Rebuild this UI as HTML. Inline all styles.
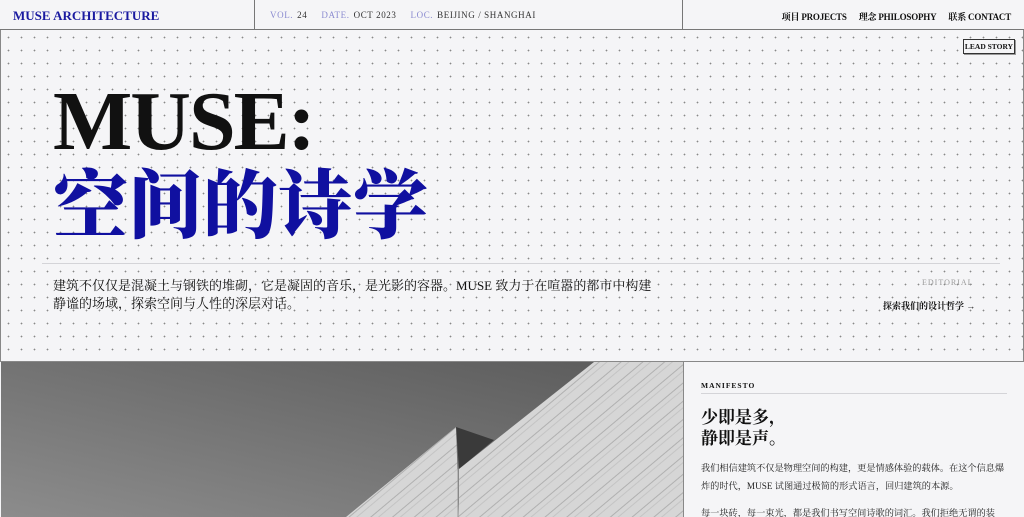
<!DOCTYPE html>
<html><head><meta charset="utf-8"><style>
*{margin:0;padding:0;box-sizing:border-box}
html,body{width:1024px;height:517px;overflow:hidden}
body{background:#f5f5f7;font-family:"Liberation Serif","Noto Serif CJK SC",serif;color:#111;position:relative}
.hdr{position:absolute;left:0;top:0;width:1024px;height:30px;border-bottom:1px solid #777}
.logo{position:absolute;left:13px;top:8px;font-size:13px;font-weight:bold;color:#1a1aa0;letter-spacing:0}
.v1{position:absolute;left:254px;top:0;width:1px;height:30px;background:#777}
.v2{position:absolute;left:682px;top:0;width:1px;height:30px;background:#777}
.meta{position:absolute;left:270px;top:10px;font-size:9px;letter-spacing:0.6px;color:#333}
.meta span{color:#8b8bd0;margin-right:4px}
.meta b{font-weight:normal;margin-right:14px}
.nav{position:absolute;right:13px;top:10px;font-size:9px;font-weight:bold;letter-spacing:-0.2px}
.nav i{font-style:normal;margin-left:12px}
.hero{position:absolute;left:0;top:30px;width:1024px;height:332px;border-left:1px solid #888;border-right:1px solid #888;border-bottom:1px solid #888;
background-image:radial-gradient(circle,#888 0.7px,transparent 1px);background-size:13px 13px;background-position:1px 1px}
.lead{position:absolute;left:963px;top:39px;width:52px;height:15px;border:1px solid #333;background:#f5f5f7;font-size:7.5px;font-weight:bold;text-align:center;line-height:13px;box-shadow:1px 1px 0 #999}
.t1{position:absolute;left:53px;top:80px;font-size:84px;font-weight:bold;line-height:84px;letter-spacing:-2px}
.t2{position:absolute;left:53px;top:158px;font-size:75px;font-weight:900;color:#1010a0;line-height:85px;font-family:"Noto Serif CJK SC",serif}
.rule{position:absolute;left:42px;top:263px;width:958px;height:1px;background:#d4d4d8}
.para{position:absolute;left:53px;top:277px;width:610px;font-size:13px;line-height:18px}
.edit{position:absolute;left:922px;top:278px;font-size:8px;letter-spacing:1px;color:#999}
.exp{position:absolute;left:883px;top:299px;font-size:9px;font-weight:bold}
.img{position:absolute;left:1px;top:362px;width:682px;height:155px}
.side{position:absolute;left:683px;top:362px;width:341px;height:155px;border-left:1px solid #888;overflow:hidden}
.mf{position:absolute;left:17px;top:19px;font-size:7.5px;font-weight:bold;letter-spacing:1px}
.mrule{position:absolute;left:17px;top:31px;width:306px;height:1px;background:#d4d4d8}
.h2{position:absolute;left:17px;top:45px;font-size:17px;font-weight:bold;line-height:21px}
.p{position:absolute;left:17px;top:97px;width:312px;font-size:9.2px;line-height:18px;color:#222}
</style></head><body>
<div class="hdr">
<div class="logo">MUSE ARCHITECTURE</div>
<div class="v1"></div><div class="v2"></div>
<div class="meta"><span>VOL.</span><b>24</b><span>DATE.</span><b>OCT 2023</b><span>LOC.</span><b>BEIJING / SHANGHAI</b></div>
<div class="nav"><i>项目 PROJECTS</i><i>理念 PHILOSOPHY</i><i>联系 CONTACT</i></div>
</div>
<div class="hero"></div>
<div class="lead">LEAD STORY</div>
<div class="t1">MUSE:</div>
<div class="t2">空间的诗学</div>
<div class="rule"></div>
<div class="para">建筑不仅仅是混凝土与钢铁的堆砌，它是凝固的音乐，是光影的容器。MUSE 致力于在喧嚣的都市中构建静谧的场域，探索空间与人性的深层对话。</div>
<div class="edit">EDITORIAL</div>
<div class="exp">探索我们的设计哲学 →</div>
<svg class="img" viewBox="0 0 682 155" preserveAspectRatio="none">
<defs><linearGradient id="g" x1="0" y1="1" x2="1" y2="0"><stop offset="0" stop-color="#8c8c8c"/><stop offset="1" stop-color="#5a5a5a"/></linearGradient>
<pattern id="s" width="14" height="14" patternUnits="userSpaceOnUse" patternTransform="rotate(-40)"><rect width="14" height="14" fill="#d6d6d6"/><rect y="6" width="14" height="1" fill="#b0b0b0"/><rect y="11" width="14" height="1" fill="#c4c4c4"/></pattern></defs>
<rect width="682" height="155" fill="url(#g)"/>
<polygon points="455,65 493,78 458,107" fill="#3a3a3a"/>
<polygon points="345,155 455,65 458,155" fill="url(#s)"/>
<polygon points="458,107 593,0 682,0 682,155 458,155" fill="url(#s)"/>
<line x1="457" y1="107" x2="457" y2="155" stroke="#999" stroke-width="1"/>
</svg>
<div class="side">
<div class="mf">MANIFESTO</div>
<div class="mrule"></div>
<div class="h2">少即是多，<br>静即是声。</div>
<div class="p">我们相信建筑不仅是物理空间的构建，更是情感体验的载体。在这个信息爆炸的时代，MUSE 试图通过极简的形式语言，回归建筑的本源。<div style="height:9px"></div>每一块砖，每一束光，都是我们书写空间诗歌的词汇。我们拒绝无谓的装饰，追</div>
</div>
</body></html>
